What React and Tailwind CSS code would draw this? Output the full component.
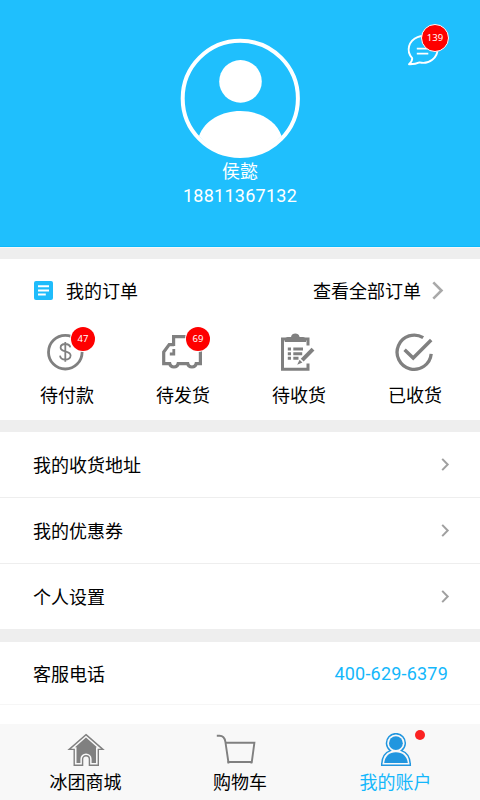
import React from 'react';

const orders = [
  { label: '待付款', icon: PayIcon, badge: 47 },
  { label: '待发货', icon: TruckIcon, badge: 69 },
  { label: '待收货', icon: ClipboardIcon },
  { label: '已收货', icon: DoneIcon },
];

const menu = ['我的收货地址', '我的优惠券', '个人设置'];

const tabs = [
  { label: '冰团商城', icon: HomeIcon, width: 'w-[171px]' },
  { label: '购物车', icon: CartIcon, width: 'w-[138px]' },
  { label: '我的账户', icon: UserIcon, width: 'w-[171px] pl-[2px]', active: true },
];

function Avatar() {
  return (
    <svg width="120" height="120" viewBox="0 0 120 120" className="block">
      <circle cx="60.3" cy="60.4" r="57.6" fill="none" stroke="#fff" strokeWidth="4" />
      <circle cx="60.5" cy="43.4" r="21.3" fill="#fff" />
      <path d="M19 98C25 82 42 73 60.3 73S96 82 101.6 98A57.6 57.6 0 0 1 60.3 118A57.6 57.6 0 0 1 19 98Z" fill="#fff" />
    </svg>
  );
}

function MessageIcon() {
  return (
    <svg width="44" height="42" viewBox="0 0 44 42" className="block">
      <path
        d="M6.2 34.2A14.4 13.4 0 1 1 13.5 38.4C10.5 39.8 6.5 40.3 3 40.2C5.3 38.3 6.4 36.6 6.2 34.2Z"
        fill="none"
        stroke="#fff"
        strokeWidth="1.9"
        strokeLinejoin="round"
      />
      <path d="M10.8 24.6H22.3M10.8 29.6H22.3" stroke="#fff" strokeWidth="1.6" />
    </svg>
  );
}

function OrderListIcon() {
  return (
    <svg width="19" height="19" viewBox="0 0 19 19" className="block">
      <rect width="19" height="19" rx="2" fill="#1fbcfb" />
      <path d="M4 5.2H15M4 9.5H15M4 13.6H11.8" stroke="#fff" strokeWidth="2" />
    </svg>
  );
}

function Chevron({ large }) {
  return large ? (
    <svg width="12" height="19" viewBox="0 0 12 19" fill="none" className="block">
      <path d="M1.3 1.3L9.5 9.5L1.3 17.7" stroke="#a9a9a9" strokeWidth="2.6" />
    </svg>
  ) : (
    <svg width="9" height="13" viewBox="0 0 9 13" fill="none" className="block">
      <path d="M1.2 0.9L6.7 6.5L1.2 12.1" stroke="#a0a0a0" strokeWidth="2" />
    </svg>
  );
}

function PayIcon() {
  return (
    <svg width="40" height="40" viewBox="0 0 40 40" fill="none" stroke="#808080" className="block">
      <circle cx="18.3" cy="20.2" r="16.8" strokeWidth="2.8" />
      <path
        d="M23.3 15.4C22.8 13.1 20.9 12 18.3 12C15.5 12 13.6 13.4 13.6 15.7C13.6 20.7 23.6 18.2 23.6 23.6C23.6 26 21.3 27.6 18.3 27.6C15.4 27.6 13.4 26.2 13 23.6M18.3 10V29.8"
        strokeWidth="1.8"
      />
    </svg>
  );
}

function TruckIcon() {
  return (
    <svg width="42" height="40" viewBox="0 0 42 40" fill="none" stroke="#808080" className="block">
      <path
        d="M11.6 14V4.6H38.4V31.6H34.2A4.3 4 0 0 1 25.7 31.6H16.2A4.3 4 0 0 1 7.7 31.6H1.7V20L7.2 12.6H12"
        strokeWidth="3.2"
      />
      <path d="M11.8 17V22H7.8" strokeWidth="2.8" />
    </svg>
  );
}

function ClipboardIcon() {
  return (
    <svg width="40" height="40" viewBox="0 0 40 40" fill="none" stroke="#808080" className="block">
      <path d="M29 13.5V7H3.5V37.3H29V31.5" strokeWidth="3" />
      <path d="M5.7 10V6.3L8.5 5H12C12.6 2.4 14.2 1.6 16.3 1.6S20 2.4 20.6 5H24.2L27 6.3V10Z" fill="#808080" stroke="none" />
      <path d="M8.8 17H12M8.8 21.7H12M8.8 26.2H12M14.3 17H24M14.3 21.7H23.2M14.3 26.2H19.5" strokeWidth="2.9" />
      <path d="M34 17.2L23.2 28.2" strokeWidth="4" />
      <path d="M20.6 27.8L23.4 30.6L18.2 32.8Z" fill="#808080" stroke="none" />
    </svg>
  );
}

function DoneIcon() {
  return (
    <svg width="40" height="40" viewBox="0 0 40 40" fill="none" stroke="#808080" className="block">
      <path d="M28.2 5.7A17.1 17.1 0 1 0 36.2 21.9" strokeWidth="3.3" />
      <path d="M9.6 17.8L18.2 26L36.2 8" strokeWidth="3.5" />
    </svg>
  );
}

function HomeIcon() {
  return (
    <svg width="38" height="34" viewBox="0 0 38 34" className="block">
      <path
        d="M19 1.6L35.9 16.4H31.3V32.3H22.4V26.2A3.4 3.4 0 0 0 15.6 26.2V32.3H7.2V16.4H2.2Z"
        fill="none"
        stroke="#808080"
        strokeWidth="1.4"
      />
      <path d="M19 4.6L30 14.3H29V29.9H24.6V26A5.6 5.6 0 0 0 13.4 26V29.9H9.5V14.3H8Z" fill="#808080" />
    </svg>
  );
}

function CartIcon() {
  return (
    <svg width="48" height="34" viewBox="0 0 48 34" fill="none" stroke="#808080" strokeWidth="1.9" className="block">
      <path d="M0.8 2.8H3.5C7.2 2.8 8.7 4.6 9.4 8.8L12.6 30.5" />
      <path d="M9.6 9.7H38.4L35.8 29H11.5M35.4 28V30.5" />
    </svg>
  );
}

function UserIcon() {
  return (
    <svg width="32" height="34" viewBox="0 0 32 34" className="block">
      <path
        d="M10.3 17.6A9.4 9.4 0 1 1 21.5 17.6C27.3 19.6 30.3 24.4 30.3 32.2H1.7C1.7 24.4 4.7 19.6 10.3 17.6Z"
        fill="none"
        stroke="#2196df"
        strokeWidth="1.5"
      />
      <circle cx="15.9" cy="10.2" r="6.9" fill="#2196df" />
      <path d="M4.2 30C4.8 23.2 9.5 19.2 15.9 19.2S27.2 23.2 27.8 30Z" fill="#2196df" />
    </svg>
  );
}

export default function App() {
  return (
    <div className="flex h-[800px] w-[480px] flex-col overflow-hidden bg-white font-['Roboto','Noto_Sans_CJK_SC',sans-serif] text-lg text-black">
      <header className="relative flex h-[247px] shrink-0 flex-col items-center border-b border-[#0fb9fb] bg-[#1fbffd] pt-[38px] text-white">
        <Avatar />
        <div className="mt-[2px] h-[24px] leading-[24px]">侯懿</div>
        <div className="leading-[24px] tracking-[0.25px]">18811367132</div>
        <div className="absolute top-[24px] left-[406px]">
          <MessageIcon />
          <span className="absolute top-0 left-[15px] flex size-[28px] items-center justify-center rounded-full border-[1.5px] border-white bg-[#fe0000] font-['Noto_Sans'] text-[9.5px]">
            139
          </span>
        </div>
      </header>
      <div className="h-px shrink-0 bg-[#f8f8f8]" />

      <section className="h-[172px] shrink-0 border-t-[11px] border-[#eee]">
        <div className="flex h-[64px] items-center pr-[36px] pb-px pl-[34px]">
          <OrderListIcon />
          <span className="ml-[13px] pt-[3px]">我的订单</span>
          <span className="ml-auto pt-[3px]">查看全部订单</span>
          <span className="ml-[11px]">
            <Chevron large />
          </span>
        </div>
        <div className="grid grid-cols-4 pr-[7px] pl-[9px]">
          {orders.map(({ label, icon: Icon, badge }) => (
            <div key={label} className="flex flex-col items-center pt-[9px]">
              <div className="relative">
                <Icon />
                {badge && (
                  <span className="absolute -top-[5px] left-[24px] flex size-[24px] items-center justify-center rounded-full bg-[#fe0000] font-['Noto_Sans'] text-[9.5px] text-white ring-1 ring-white">
                    {badge}
                  </span>
                )}
              </div>
              <span className="mt-[12px] leading-[24px]">{label}</span>
            </div>
          ))}
        </div>
      </section>

      <ul className="shrink-0 border-t-[12px] border-[#eee]">
        {menu.map((item) => (
          <li key={item} className="flex h-[66px] items-center justify-between border-b border-[#eee] pr-[30px] pl-[33px]">
            <span className="pt-[2px]">{item}</span>
            <Chevron />
          </li>
        ))}
      </ul>

      <div className="flex h-[75px] shrink-0 items-center justify-between border-t-[12px] border-b border-t-[#eee] border-b-[#f6f6f6] pr-[32px] pl-[33px]">
        <span className="pt-[3px]">客服电话</span>
        <span className="pt-[2px] tracking-[0.2px] text-[#14b7fb]">400-629-6379</span>
      </div>

      <nav className="mt-auto flex h-[76px] shrink-0 bg-[#f8f8f8]">
        {tabs.map(({ label, icon: Icon, width, active }) => (
          <div key={label} className={`flex flex-col items-center pt-[9px] ${width} ${active ? 'text-[#14b7fb]' : ''}`}>
            <div className="relative">
              <Icon />
              {active && <span className="absolute -top-[3px] left-[35px] size-[10px] rounded-full bg-[#fb2222]" />}
            </div>
            <span className="mt-[4px] leading-[24px]">{label}</span>
          </div>
        ))}
      </nav>
    </div>
  );
}
